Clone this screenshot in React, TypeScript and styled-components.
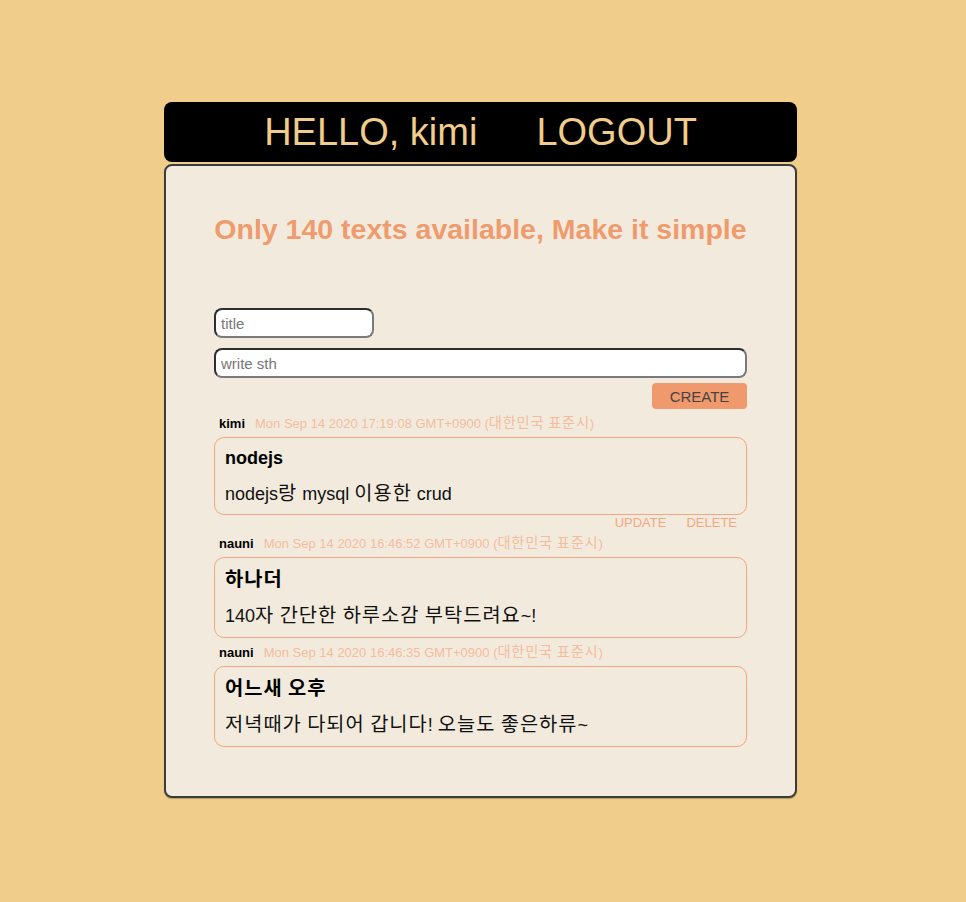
import React from "react";
import styled, { createGlobalStyle } from "styled-components";

const GlobalStyle = createGlobalStyle`
  html, body {
    margin: 0;
    padding: 0;
    background: #f0cd8a;
    font-family: "Liberation Sans", Arial, "Noto Sans CJK KR", sans-serif;
  }
  * { box-sizing: border-box; }
`;

const Page = styled.div`
  min-height: 902px;
  display: flex;
  justify-content: center;
  padding: 102px 5px 0 0;
`;

const Wrapper = styled.div`
  width: 633px;
  display: flex;
  flex-direction: column;
  gap: 2px;
`;

const Header = styled.header`
  height: 60px;
  background: #000;
  border-radius: 8px;
  display: flex;
  align-items: center;
  justify-content: center;
  gap: 59px;
  color: #f0cd8a;
  font-size: 38px;
  line-height: 1;
`;

const HeaderItem = styled.span`
  cursor: pointer;
`;

const Panel = styled.main`
  background: #f2ebdd;
  border: 2px solid #3c3c3c;
  border-radius: 8px;
  box-shadow: 0 1px 1px rgba(0, 0, 0, 0.25);
  padding: 47px 48px 49px;
  display: flex;
  flex-direction: column;
`;

const Title = styled.h1`
  margin: 0;
  text-align: center;
  color: #f09b6e;
  font-size: 28.5px;
  font-weight: bold;
  line-height: 33px;
`;

const Form = styled.form`
  margin-top: 62px;
  display: flex;
  flex-direction: column;
  gap: 10px;
`;

const Input = styled.input<{ $width?: number }>`
  width: ${(p) => (p.$width ? `${p.$width}px` : "100%")};
  height: 30px;
  border: 2px solid #2e2e2e;
  border-right-color: #7a7a7a;
  border-bottom-color: #7a7a7a;
  border-radius: 8px;
  background: #fff;
  padding: 0 5px;
  font-family: "Liberation Sans", Arial, sans-serif;
  font-size: 15px;
  color: #222;
  outline: none;
  &::placeholder {
    color: #777;
  }
`;

const ButtonRow = styled.div`
  display: flex;
  justify-content: flex-end;
  margin-top: -5px;
`;

const CreateButton = styled.button`
  width: 95px;
  height: 26px;
  border: none;
  border-radius: 4px;
  background: #f0996c;
  color: #444;
  font-family: "Liberation Sans", Arial, sans-serif;
  font-size: 15px;
  padding: 0;
  cursor: pointer;
`;

const PostList = styled.section`
  display: flex;
  flex-direction: column;
`;

const Post = styled.article`
  display: flex;
  flex-direction: column;
`;

const Meta = styled.div`
  display: flex;
  align-items: center;
  gap: 10px;
  padding-left: 5px;
  height: 14px;
  margin: 7px 0 7px;
  overflow: visible;
`;

const Author = styled.span`
  font-size: 13px;
  font-weight: bold;
  color: #000;
`;

const DateText = styled.span`
  font-size: 13px;
  line-height: 14px;
  color: #f5bb9d;
`;

const Card = styled.div<{ $tall?: boolean }>`
  border: 1px solid #f3a680;
  border-radius: 10px;
  padding: ${(p) => (p.$tall ? "10px 10px 10px" : "9px 10px")};
  display: flex;
  flex-direction: column;
  gap: 13px;
`;

const CardTitle = styled.h3`
  margin: 0;
  font-size: 18px;
  font-weight: bold;
  line-height: 22px;
  color: #000;
`;

const CardBody = styled.p`
  margin: 0;
  font-size: 18px;
  line-height: 22px;
  color: #111;
`;

const Hangul = styled.span`
  font-family: "Noto Sans CJK KR", sans-serif;
  font-size: 1.1em;
  letter-spacing: 0.05em;
  line-height: 1;
`;

const Actions = styled.div`
  display: flex;
  justify-content: flex-end;
  gap: 20px;
  padding-right: 10px;
  height: 14px;
  align-items: center;
`;

const ActionLink = styled.span`
  font-size: 13px;
  color: #f2a781;
  cursor: pointer;
`;

const HANGUL_RUN = /([\u3131-\u318e\uac00-\ud7a3]+(?:\s+[\u3131-\u318e\uac00-\ud7a3]+)*)/;

function Ko({ text }: { text: string }) {
  const parts = text.split(HANGUL_RUN);
  return (
    <>
      {parts.map((part, i) =>
        i % 2 === 1 ? <Hangul key={i}>{part}</Hangul> : <React.Fragment key={i}>{part}</React.Fragment>
      )}
    </>
  );
}

type PostData = {
  author: string;
  date: string;
  title: string;
  body: string;
  mine?: boolean;
};

const posts: PostData[] = [
  {
    author: "kimi",
    date: "Mon Sep 14 2020 17:19:08 GMT+0900 (대한민국 표준시)",
    title: "nodejs",
    body: "nodejs랑 mysql 이용한 crud",
    mine: true,
  },
  {
    author: "nauni",
    date: "Mon Sep 14 2020 16:46:52 GMT+0900 (대한민국 표준시)",
    title: "하나더",
    body: "140자 간단한 하루소감 부탁드려요~!",
  },
  {
    author: "nauni",
    date: "Mon Sep 14 2020 16:46:35 GMT+0900 (대한민국 표준시)",
    title: "어느새 오후",
    body: "저녁때가 다되어 갑니다! 오늘도 좋은하류~",
  },
];

const hasHangul = (s: string) => /[\uac00-\ud7a3]/.test(s);

export default function App() {
  return (
    <>
      <GlobalStyle />
      <Page>
        <Wrapper>
          <Header>
            <HeaderItem>HELLO, kimi</HeaderItem>
            <HeaderItem>LOGOUT</HeaderItem>
          </Header>
          <Panel>
            <Title>Only 140 texts available, Make it simple</Title>
            <Form onSubmit={(e) => e.preventDefault()}>
              <Input $width={160} placeholder="title" />
              <Input placeholder="write sth" />
              <ButtonRow>
                <CreateButton type="submit">CREATE</CreateButton>
              </ButtonRow>
            </Form>
            <PostList>
              {posts.map((p, i) => (
                <Post key={i}>
                  <Meta>
                    <Author>{p.author}</Author>
                    <DateText>
                      <Ko text={p.date} />
                    </DateText>
                  </Meta>
                  <Card $tall={hasHangul(p.title)}>
                    <CardTitle>
                      <Ko text={p.title} />
                    </CardTitle>
                    <CardBody>
                      <Ko text={p.body} />
                    </CardBody>
                  </Card>
                  {p.mine && (
                    <Actions>
                      <ActionLink>UPDATE</ActionLink>
                      <ActionLink>DELETE</ActionLink>
                    </Actions>
                  )}
                </Post>
              ))}
            </PostList>
          </Panel>
        </Wrapper>
      </Page>
    </>
  );
}
